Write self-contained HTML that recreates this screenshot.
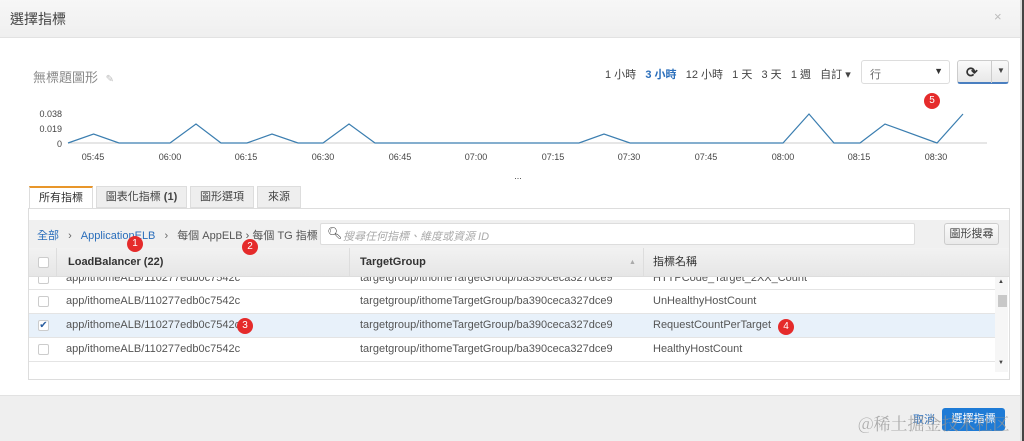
<!DOCTYPE html>
<html><head><meta charset="utf-8"><style>
*{box-sizing:border-box;margin:0;padding:0}
body{width:1024px;height:441px;overflow:hidden;background:#fff;font-family:"Liberation Sans","Noto Sans CJK TC",sans-serif;font-size:11px;color:#444;position:relative}
.a{position:absolute}
.hdr{left:0;top:0;width:1024px;height:38px;background:linear-gradient(#f7f7f7,#efefef);border-bottom:1px solid #e2e2e2}
.badge{position:absolute;width:16px;height:16px;border-radius:8px;background:#e52b2b;color:#fff;font-size:10px;text-align:center;line-height:16px}
.row{position:absolute;left:29px;width:966px;height:24px;border-bottom:1px solid #e4e4e4;line-height:23px;color:#555}
.row span{position:absolute}
.cb{position:absolute;left:9px;top:6px;width:11px;height:11px;border:1px solid #ccc;border-radius:2px;background:#fff}
</style></head><body>
<div class="a hdr"><div class="a" style="left:10px;top:9px;font-size:14px;color:#444">選擇指標</div><div class="a" style="left:994px;top:9px;font-size:13px;color:#bbb">×</div></div>
<div class="a" style="left:33px;top:67px;font-size:13px;color:#888">無標題圖形 <span style="color:#bbb;font-size:10px;margin-left:4px">✎</span></div>
<div class="a" style="left:605px;top:66px;font-size:11px;color:#444;word-spacing:0">1 小時&nbsp;&nbsp;&nbsp;<span style="color:#2a6ebb;font-weight:bold">3 小時</span>&nbsp;&nbsp;&nbsp;12 小時&nbsp;&nbsp;&nbsp;1 天&nbsp;&nbsp;&nbsp;3 天&nbsp;&nbsp;&nbsp;1 週&nbsp;&nbsp;&nbsp;自訂 ▾</div>
<div class="a" style="left:861px;top:60px;width:89px;height:24px;border:1px solid #ddd;border-radius:3px;padding:5px 8px;color:#666">行<span style="position:absolute;right:6px;top:5px;font-size:9px;color:#333">▼</span></div>
<div class="a" style="left:957px;top:60px;width:52px;height:24px;border:1px solid #ccc;border-radius:3px;background:linear-gradient(#fafafa,#e8e8e8);border-bottom:2px solid #4a7fc0"><span class="a" style="left:8px;top:3px;font-size:14px;font-weight:bold;color:#333">⟳</span><span class="a" style="left:33px;top:0;height:22px;border-left:1px solid #ccc"></span><span class="a" style="left:39px;top:5px;font-size:8px">▼</span></div>
<div class="badge" style="left:924px;top:93px">5</div>
<svg class="a" style="left:0;top:100px" width="1024" height="90">
<g font-size="9" fill="#444" font-family="Liberation Sans" text-anchor="end"><text x="62" y="17">0.038</text><text x="62" y="32">0.019</text><text x="62" y="47">0</text></g>
<line x1="68" y1="43" x2="987" y2="43" stroke="#ccc"/>
<polyline fill="none" stroke="#3b7eb0" stroke-width="1.2" points="68,43 93.6,34 119,43 145,43 170,43 196,24 221,43 247,43 272,34 298,43 323,43 349,24 375,43 579,43 604,34 630,43 783,43 809,14 834,43 860,43 885,24 937,43 963,14"/>
<g font-size="9" fill="#444" font-family="Liberation Sans" text-anchor="middle"><text x="93" y="60">05:45</text><text x="170" y="60">06:00</text><text x="246" y="60">06:15</text><text x="323" y="60">06:30</text><text x="400" y="60">06:45</text><text x="476" y="60">07:00</text><text x="553" y="60">07:15</text><text x="629" y="60">07:30</text><text x="706" y="60">07:45</text><text x="783" y="60">08:00</text><text x="859" y="60">08:15</text><text x="936" y="60">08:30</text><text x="518" y="79">...</text></g>
</svg>
<div class="a" style="left:29px;top:186px;width:64px;height:23px;border:1px solid #ddd;border-top:2px solid #e8962a;border-bottom:none;background:#fff;text-align:center;line-height:20px;color:#333">所有指標</div>
<div class="a" style="left:96px;top:186px;width:91px;height:22px;border:1px solid #ddd;background:#eee;text-align:center;line-height:21px;color:#444">圖表化指標 <b>(1)</b></div>
<div class="a" style="left:190px;top:186px;width:64px;height:22px;border:1px solid #ddd;background:#eee;text-align:center;line-height:21px">圖形選項</div>
<div class="a" style="left:257px;top:186px;width:44px;height:22px;border:1px solid #ddd;background:#eee;text-align:center;line-height:21px">來源</div>
<div class="a" style="left:28px;top:208px;width:982px;height:172px;border:1px solid #ddd;background:#fff"></div>
<div class="a" style="left:29px;top:220px;width:980px;height:28px;background:#f0f0f0"></div>
<div class="a" style="left:37px;top:227px;color:#2a6ebb">全部 <span style="color:#666;margin:0 6px">›</span> ApplicationELB <span style="color:#666;margin:0 6px">›</span> <span style="color:#555">每個 AppELB › 每個 TG 指標</span></div>
<div class="a" style="left:320px;top:223px;width:595px;height:22px;border:1px solid #ddd;background:#fff;border-radius:2px"><span class="a" style="left:6px;top:2px;font-size:12px;color:#333">&#x1F50D;&#xFE0E;</span><span class="a" style="left:22px;top:4px;color:#aaa;font-style:italic">搜尋任何指標、維度或資源 ID</span></div>
<div class="a" style="left:944px;top:223px;width:55px;height:22px;border:1px solid #ccc;border-radius:3px;background:linear-gradient(#fafafa,#eaeaea);text-align:center;line-height:20px;color:#444">圖形搜尋</div>
<div class="a" style="left:29px;top:248px;width:980px;height:29px;background:linear-gradient(#f2f2f2,#e6e6e6);border-bottom:1px solid #ddd;font-weight:bold;color:#333;line-height:29px">
<div class="cb" style="top:9px"></div><span class="a" style="left:27px;top:0;height:29px;border-left:1px solid #ddd"></span>
<span class="a" style="left:39px">LoadBalancer (22)</span><span class="a" style="left:320px;top:0;height:29px;border-left:1px solid #ddd"></span>
<span class="a" style="left:331px">TargetGroup</span><span class="a" style="left:600px;font-size:7px;color:#aaa">▲</span><span class="a" style="left:614px;top:0;height:29px;border-left:1px solid #ddd"></span><span class="a" style="left:624px;font-weight:normal">指標名稱</span></div>
<div class="row" style="top:277px;height:13px;overflow:hidden;line-height:2px"><div class="cb" style="top:-4px"></div><span style="left:37px">app/ithomeALB/110277edb0c7542c</span><span style="left:331px">targetgroup/ithomeTargetGroup/ba390ceca327dce9</span><span style="left:624px">HTTPCode_Target_2XX_Count</span></div>
<div class="row" style="top:290px"><div class="cb"></div><span style="left:37px">app/ithomeALB/110277edb0c7542c</span><span style="left:331px">targetgroup/ithomeTargetGroup/ba390ceca327dce9</span><span style="left:624px">UnHealthyHostCount</span></div>
<div class="row" style="top:314px;background:#e8f1fa"><div class="cb" style="color:#2a5ea0;font-size:10px;line-height:9px;text-align:center">✔</div><span style="left:37px">app/ithomeALB/110277edb0c7542c</span><span style="left:331px">targetgroup/ithomeTargetGroup/ba390ceca327dce9</span><span style="left:624px">RequestCountPerTarget</span></div>
<div class="row" style="top:338px"><div class="cb"></div><span style="left:37px">app/ithomeALB/110277edb0c7542c</span><span style="left:331px">targetgroup/ithomeTargetGroup/ba390ceca327dce9</span><span style="left:624px">HealthyHostCount</span></div>
<div class="a" style="left:995px;top:277px;width:13px;height:95px;background:#f6f6f6"><span class="a" style="left:3px;top:18px;width:9px;height:12px;background:#c8c8c8"></span><span class="a" style="left:3px;top:2px;font-size:6px">▲</span><span class="a" style="left:3px;top:83px;font-size:6px">▼</span></div>
<div class="badge" style="left:127px;top:236px">1</div><div class="badge" style="left:242px;top:239px">2</div><div class="badge" style="left:237px;top:318px">3</div><div class="badge" style="left:778px;top:319px">4</div>
<div class="a" style="left:0;top:395px;width:1024px;height:46px;background:#efefef;border-top:1px solid #e2e2e2"></div>
<div class="a" style="left:913px;top:411px;color:#2a6ebb">取消</div>
<div class="a" style="left:942px;top:408px;width:63px;height:23px;background:#1e7bd6;border-radius:3px;color:#fff;text-align:center;line-height:23px">選擇指標</div>
<div class="a" style="left:858px;top:410px;font-size:17px;color:rgba(150,150,150,.75);font-family:'Noto Serif CJK SC',serif">@稀土掘金技术社区</div>
<div class="a" style="left:1020px;top:0;width:2px;height:441px;background:#ddd"></div>
<div class="a" style="left:1022px;top:0;width:2px;height:441px;background:#444"></div>
</body></html>
